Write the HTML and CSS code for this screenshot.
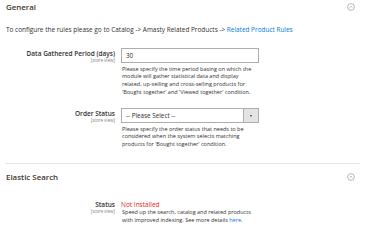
FILE: index.html
```html
<!DOCTYPE html>
<html lang="en">
<head>
<meta charset="utf-8">
<title>Configuration</title>
<link rel="stylesheet" href="styles.css">
</head>
<body>
<div class="page">
  <section class="group">
    <div class="group-head">
      <span class="group-title">General</span>
      <span class="toggle"><svg viewBox="0 0 8 8" width="8" height="8"><circle cx="4" cy="4" r="3.4" fill="none" stroke="#8a8a8a" stroke-width="0.6"/><path d="M2.5 4.6 L4 3.2 L5.5 4.6" fill="none" stroke="#8a8a8a" stroke-width="0.6"/></svg></span>
    </div>
    <p class="intro">To configure the rules please go to Catalog -&gt; Amasty Related Products -&gt; <a class="link" href="#">Related Product Rules</a></p>

    <div class="row row-first">
      <div class="label"><span class="lbl">Data Gathered Period (days)</span><span class="scope">[store view]</span></div>
      <div class="value">
        <div class="input">30</div>
        <p class="note">Please specify the time period basing on which the<br>module will gather statistical data and display<br>related, up-selling and cross-selling products for<br>'Bought together' and 'Viewed together' condition.</p>
      </div>
    </div>

    <div class="row row-second">
      <div class="label"><span class="lbl">Order Status</span><span class="scope">[store view]</span></div>
      <div class="value">
        <div class="select"><span class="select-text">-- Please Select --</span><span class="select-btn"><span class="caret"></span></span></div>
        <p class="note">Please specify the order status that needs to be<br>considered when the system selects matching<br>products for 'Bought together' condition.</p>
      </div>
    </div>
  </section>

  <section class="group group-elastic">
    <div class="group-head">
      <span class="group-title">Elastic Search</span>
      <span class="toggle"><svg viewBox="0 0 8 8" width="8" height="8"><circle cx="4" cy="4" r="3.4" fill="none" stroke="#8a8a8a" stroke-width="0.6"/><path d="M2.5 4.6 L4 3.2 L5.5 4.6" fill="none" stroke="#8a8a8a" stroke-width="0.6"/></svg></span>
    </div>
    <div class="row row-status">
      <div class="label"><span class="lbl">Status</span><span class="scope">[store view]</span></div>
      <div class="value">
        <div class="status">Not Installed</div>
        <p class="note">Speed up the search, catalog and related products<br>with improved indexing. See more details <a class="link" href="#">here</a>.</p>
      </div>
    </div>
  </section>
</div>
</body>
</html>
```

FILE: styles.css
```css
html, body {
  margin: 0;
  padding: 0;
  background: #ffffff;
}
body {
  font-family: "Open Sans", "Liberation Sans", sans-serif;
  color: #303030;
}
.page {
  width: 355px;
  padding-left: 5px;
}
.group {
  border-bottom: 1px solid #e3e3e3;
  padding-bottom: 14px;
}
.group-elastic {
  border-bottom: none;
  margin-top: 6px;
}
.group-head {
  display: flex;
  align-items: center;
  justify-content: space-between;
  height: 14px;
  padding: 0 5px 0 1px;
}
.group-title {
  font-size: 7.9px;
  font-weight: 600;
  color: #41362f;
  line-height: 14px;
}
.toggle {
  display: flex;
  width: 8px;
  height: 8px;
}
.intro {
  margin: 12px 0 0 1px;
  font-size: 6.45px;
  line-height: 8px;
  white-space: nowrap;
}
.link {
  color: #007bdb;
  text-decoration: none;
}
.row {
  display: flex;
  gap: 6px;
}
.row-first { margin-top: 14px; }
.row-second { margin-top: 11.5px; }
.row-status { margin-top: 15.3px; }
.label {
  width: 110px;
  display: flex;
  flex-direction: column;
  align-items: flex-end;
  padding-top: 2px;
}
.lbl {
  font-size: 6.5px;
  font-weight: 600;
  line-height: 8px;
  white-space: nowrap;
}
.scope {
  font-size: 4.5px;
  line-height: 4px;
  color: #808080;
  white-space: nowrap;
}
.value {
  width: 138px;
}
.input, .select {
  box-sizing: border-box;
  height: 15px;
  border: 1px solid #adadad;
  font-size: 6.3px;
  line-height: 13px;
  padding-left: 4px;
  background: #fff;
}
.select {
  display: flex;
  justify-content: space-between;
  padding-left: 4px;
}
.select-btn {
  width: 14px;
  height: 13px;
  border-left: 1px solid #adadad;
  background: #e3e3e3;
  display: flex;
  align-items: center;
  justify-content: center;
}
.caret {
  width: 0;
  height: 0;
  border-left: 1.6px solid transparent;
  border-right: 1.6px solid transparent;
  border-top: 2px solid #41362f;
}
.note {
  margin: 2.7px 0 0 1px;
  font-size: 5.5px;
  line-height: 7.7px;
  white-space: nowrap;
}
.status {
  color: #e22626;
  font-size: 6.5px;
  line-height: 8px;
  padding-top: 2px;
}
.row-status .note {
  margin-top: 0;
}
```
